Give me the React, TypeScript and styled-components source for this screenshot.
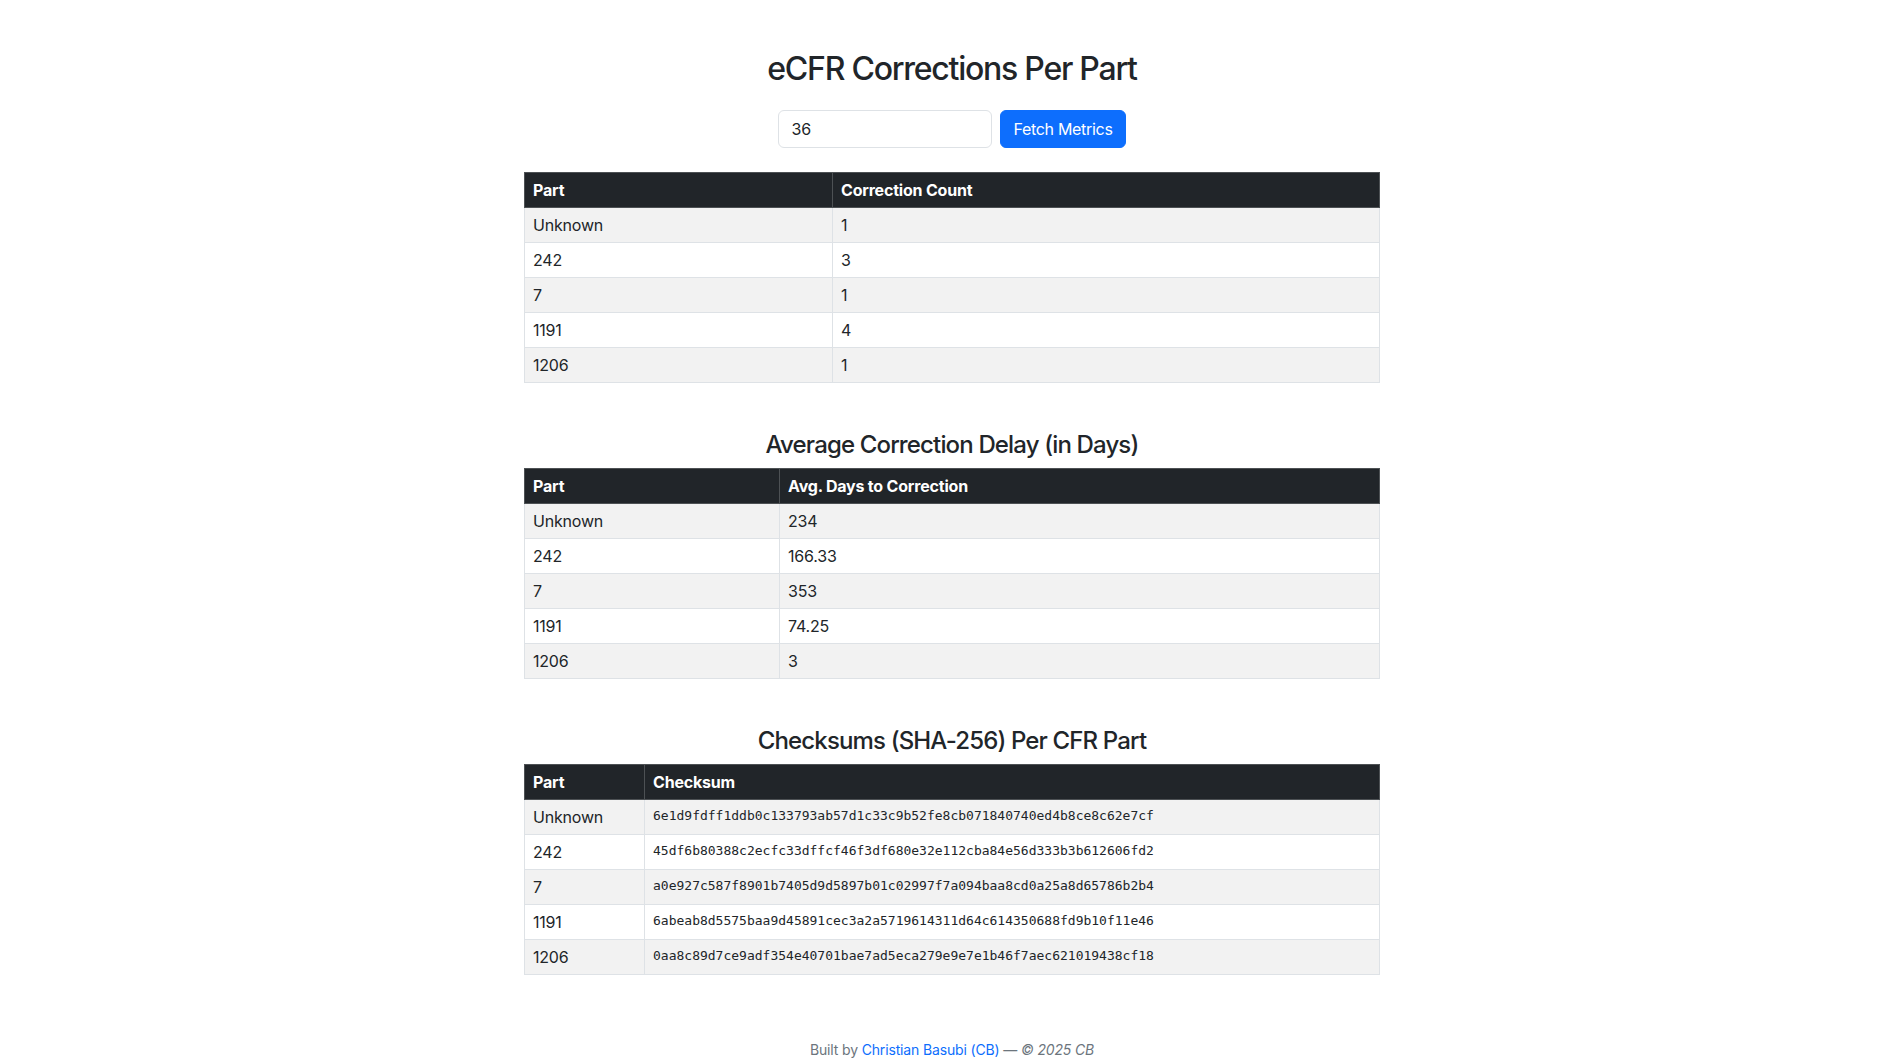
import React from "react";
import styled, { createGlobalStyle } from "styled-components";

const GlobalStyle = createGlobalStyle`
  html, body {
    margin: 0;
    padding: 0;
    background: #ffffff;
  }
  body {
    font-family: Inter, "Liberation Sans", Arial, sans-serif;
    font-size: 16px;
    line-height: 1.5;
    color: #212529;
  }
  * { box-sizing: border-box; }
`;

const Page = styled.main`
  width: 856px;
  margin: 0 auto;
  padding-top: 50px;
  display: flex;
  flex-direction: column;
`;

const Title = styled.h1`
  margin: 0 0 22px;
  font-size: 32px;
  font-weight: 500;
  line-height: 1.2;
  text-align: center;
  letter-spacing: -1.25px;
`;

const Form = styled.form`
  display: flex;
  justify-content: center;
  gap: 8px;
  margin: 0 0 24px;
`;

const Input = styled.input`
  width: 214px;
  height: 38px;
  padding: 6px 12px;
  border: 1px solid #dee2e6;
  border-radius: 6px;
  font-family: inherit;
  font-size: 16px;
  color: #212529;
  background: #fff;
  outline: none;
`;

const Button = styled.button`
  height: 38px;
  padding: 6px 12px;
  border: 1px solid #0d6efd;
  border-radius: 6px;
  background: #0d6efd;
  color: #fff;
  font-family: inherit;
  font-size: 16px;
  line-height: 1.5;
  letter-spacing: -0.3px;
  cursor: pointer;
`;

const SectionTitle = styled.h2`
  margin: 48px 0 8px;
  font-size: 24px;
  font-weight: 500;
  line-height: 1.2;
  text-align: center;
  letter-spacing: -0.85px;
`;

const Table = styled.table`
  width: 100%;
  border-collapse: collapse;
  border: 1px solid #dee2e6;
  letter-spacing: -0.2px;
`;

const HeadCell = styled.th<{ $w?: number }>`
  ${(p) => (p.$w ? `width: ${p.$w}px;` : "")}
  background: #212529;
  color: #fff;
  font-weight: 700;
  text-align: left;
  padding: 5px 8px;
  line-height: 24px;
  height: 35px;
  border: 1px solid #4d5154;
`;

const Row = styled.tr<{ $striped: boolean }>`
  background: ${(p) => (p.$striped ? "#f2f2f2" : "#ffffff")};
`;

const Cell = styled.td`
  padding: 5px 8px;
  line-height: 24px;
  height: 35px;
  border: 1px solid #dee2e6;
  vertical-align: middle;
`;

const HashCell = styled(Cell)`
  font-family: "DejaVu Sans Mono", "Liberation Mono", monospace;
  font-size: 13px;
  letter-spacing: 0;
  padding: 4px 8px 6px;
`;

const Footer = styled.footer`
  margin-top: 64px;
  padding-bottom: 2px;
  text-align: center;
  font-size: 14px;
  line-height: 21px;
  color: #6c757d;
  letter-spacing: -0.15px;
`;

const Link = styled.a`
  color: #0d6efd;
  text-decoration: none;
`;

const parts = ["Unknown", "242", "7", "1191", "1206"];
const counts = ["1", "3", "1", "4", "1"];
const delays = ["234", "166.33", "353", "74.25", "3"];
const hashes = [
  "6e1d9fdff1ddb0c133793ab57d1c33c9b52fe8cb071840740ed4b8ce8c62e7cf",
  "45df6b80388c2ecfc33dffcf46f3df680e32e112cba84e56d333b3b612606fd2",
  "a0e927c587f8901b7405d9d5897b01c02997f7a094baa8cd0a25a8d65786b2b4",
  "6abeab8d5575baa9d45891cec3a2a5719614311d64c614350688fd9b10f11e46",
  "0aa8c89d7ce9adf354e40701bae7ad5eca279e9e7e1b46f7aec621019438cf18",
];

type DataTableProps = {
  firstWidth: number;
  second: string;
  values: string[];
  mono?: boolean;
};

function DataTable({ firstWidth, second, values, mono }: DataTableProps) {
  return (
    <Table>
      <thead>
        <tr>
          <HeadCell $w={firstWidth}>Part</HeadCell>
          <HeadCell>{second}</HeadCell>
        </tr>
      </thead>
      <tbody>
        {parts.map((p, i) => (
          <Row key={p} $striped={i % 2 === 0}>
            <Cell>{p}</Cell>
            {mono ? <HashCell>{values[i]}</HashCell> : <Cell>{values[i]}</Cell>}
          </Row>
        ))}
      </tbody>
    </Table>
  );
}

export default function App() {
  return (
    <>
      <GlobalStyle />
      <Page>
        <Title>eCFR Corrections Per Part</Title>
        <Form onSubmit={(e) => e.preventDefault()}>
          <Input defaultValue="36" />
          <Button type="submit">Fetch Metrics</Button>
        </Form>
        <DataTable firstWidth={308} second="Correction Count" values={counts} />
        <SectionTitle>Average Correction Delay (in Days)</SectionTitle>
        <DataTable firstWidth={255} second="Avg. Days to Correction" values={delays} />
        <SectionTitle>Checksums (SHA-256) Per CFR Part</SectionTitle>
        <DataTable firstWidth={120} second="Checksum" values={hashes} mono />
        <Footer>
          Built by <Link href="#">Christian Basubi (CB)</Link> — <em>© 2025 CB</em>
        </Footer>
      </Page>
    </>
  );
}
